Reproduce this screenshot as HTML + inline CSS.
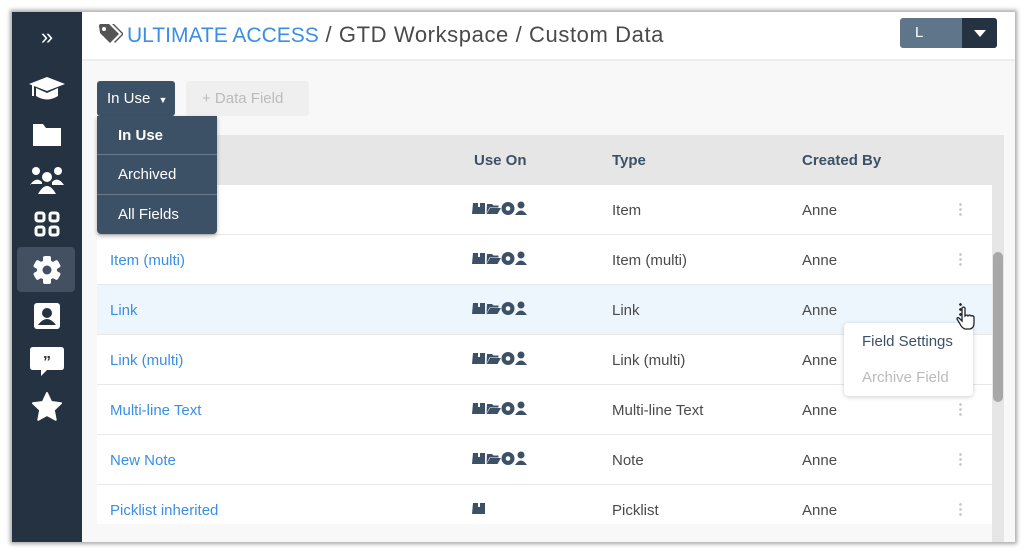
<!DOCTYPE html>
<html><head><style>
*{box-sizing:border-box;margin:0;padding:0}
body{width:1024px;height:553px;background:#fff;font-family:"Liberation Sans",sans-serif;position:relative;overflow:hidden}
.win{position:absolute;left:12px;top:12px;width:1003px;height:530px;background:#f8f8f8;box-shadow:0 0 4px 2px rgba(0,0,0,.35);overflow:hidden}
.side{position:absolute;left:0;top:0;width:70px;height:530px;background:#243242}
.side .ic{position:absolute;left:0;width:70px;text-align:center;color:#fff}
.hdr{position:absolute;left:70px;top:0;right:0;height:49px;background:#fff;border-bottom:2px solid #eee}
.bc{position:absolute;left:45px;top:10px;font-size:21px;color:#4a4a4a;white-space:nowrap}
.bc a{color:#3a8ee6}
.bc b{font-weight:normal;font-size:22px;letter-spacing:0.6px}
.tbl{position:absolute;left:85px;top:123px;width:895px;height:389px;background:#fff;overflow:hidden}
.th{height:50px;background:#e6e6e6;font-weight:bold;color:#3d5166;font-size:15px;position:relative}
.row{height:50px;border-bottom:1px solid #e8e8e8;position:relative;font-size:15px;color:#4a4a4a}
.row span,.th span{position:absolute;top:17px}
.c1{left:13px;color:#3a8ee6}.c2{left:377px}.c3{left:515px}.c4{left:705px}
.dots{position:absolute;left:862px;top:17px;width:3px;height:14px;background:radial-gradient(circle,#ccc 1.3px,transparent 1.5px) 0 0/3px 5px}
.sb{position:absolute;left:980px;top:123px;width:12px;height:407px;background:#e6e6e6}
.sb div{position:absolute;left:1px;top:117px;width:10px;height:150px;background:#a8a8a8;border-radius:5px}
</style></head><body>
<div class="win">
 <div class="side">
  <div class="ic" style="top:12px;font-size:22px">»</div>
  <svg class="ic" style="top:62px" width="70" height="30" viewBox="0 0 70 30"><path d="M17 10 L35 3 L53 10 L35 17Z M24 14 v8 q11 7 22 0 v-8 l-11 5z" fill="#fff"/><rect x="20" y="11" width="2" height="11" fill="#fff"/></svg>
  <svg class="ic" style="top:108px" width="70" height="28"><path d="M21 4 h10 l3 4 h15 v18 h-28z" fill="#fff"/></svg>
  <svg class="ic" style="top:152px" width="70" height="32"><g fill="#fff"><circle cx="24" cy="7" r="4"/><circle cx="46" cy="7" r="4"/><circle cx="35" cy="13" r="5"/><path d="M18 21 q6-9 12-3 v2 h-12z M40 18 q6-6 12 3 h-12z M26 30 q9-16 18 0z"/></g></svg>
  <svg class="ic" style="top:199px" width="70" height="28"><g fill="none" stroke="#fff" stroke-width="3"><rect x="24" y="2" width="8" height="8" rx="2"/><rect x="38" y="2" width="8" height="8" rx="2"/><rect x="24" y="16" width="8" height="8" rx="2"/><rect x="38" y="16" width="8" height="8" rx="2"/></g></svg>
  <div style="position:absolute;left:5px;top:235px;width:58px;height:45px;background:#425062;border-radius:4px"></div>
  <svg class="ic" style="top:243px" width="70" height="30"><g fill="#fff"><circle cx="35" cy="15" r="10"/><g id="t"><rect x="31" y="1" width="8" height="28" rx="2"/></g><use href="#t" transform="rotate(60 35 15)"/><use href="#t" transform="rotate(120 35 15)"/></g><circle cx="35" cy="15" r="4.5" fill="#425062"/></svg>
  <svg class="ic" style="top:290px" width="70" height="28"><rect x="22" y="1" width="26" height="26" rx="3" fill="#fff"/><circle cx="35" cy="11" r="5" fill="#243242"/><path d="M26 23 q9-12 18 0z" fill="#243242"/></svg>
  <svg class="ic" style="top:334px" width="70" height="32"><path d="M21 1 h28 q3 0 3 3 v17 q0 3-3 3 h-14 l-6 6 v-6 h-8 q-3 0-3-3 v-17 q0-3 3-3z" fill="#fff"/><text x="35" y="21" font-size="16" font-weight="bold" fill="#243242" text-anchor="middle" font-family="Liberation Sans">”</text></svg>
  <svg class="ic" style="top:380px" width="70" height="30"><path d="M35 1 l4.2 9 9.8 1.2 -7.2 6.8 1.9 9.8 -8.7 -4.8 -8.7 4.8 1.9 -9.8 -7.2 -6.8 9.8 -1.2z" fill="#fff" stroke="#fff" stroke-width="2" stroke-linejoin="round"/></svg>
 </div>
 <div class="hdr">
  <svg style="position:absolute;left:15px;top:11px" width="26" height="24"><path d="M2 3 q0-2 2-2 h8 l10 10 -9 9 -10-10z" fill="#555"/><path d="M15 1 h2 l10 10 -9 9 -1-1 8-8z" fill="#555"/><circle cx="7" cy="6" r="2" fill="#fff"/></svg>
  <div class="bc"><a>ULTIMATE ACCESS</a><b> / GTD Workspace / Custom Data</b></div>
  <div style="position:absolute;left:818px;top:6px;width:97px;height:30px;border-radius:3px;background:#5f7589;overflow:hidden">
   <span style="position:absolute;left:15px;top:6px;color:#fff;font-size:15px">L</span>
   <div style="position:absolute;left:62px;top:0;width:35px;height:30px;background:#243242"><div style="position:absolute;left:12px;top:12px;border:6px solid transparent;border-top:7px solid #fff;border-bottom:0"></div></div>
  </div>
 </div>
 <div style="position:absolute;left:85px;top:69px;width:78px;height:35px;background:#3d5166;border-radius:3px;color:#fff;font-size:15px;padding:9px 0 0 10px">In Use <span style="font-size:9px;margin-left:4px">▼</span></div>
 <div style="position:absolute;left:174px;top:69px;width:123px;height:35px;background:#efefef;border-radius:3px;color:#bbb;font-size:15px;padding:9px 0 0 16px">+ Data Field</div>
 <div class="tbl">
  <div class="th"><span class="c2" style="color:#3d5166">Use On</span><span class="c3" style="color:#3d5166">Type</span><span class="c4" style="color:#3d5166">Created By</span></div>
  <div class="row"><span class="c3">Item</span><span class="c4">Anne</span><div class="dots"></div></div>
  <div class="row"><span class="c1">Item (multi)</span><span class="c3">Item (multi)</span><span class="c4">Anne</span><div class="dots"></div></div>
  <div class="row" style="background:#eef6fd"><span class="c1">Link</span><span class="c3">Link</span><span class="c4">Anne</span><div class="dots" style="background:radial-gradient(circle,#333 1.3px,transparent 1.5px) 0 0/3px 5px"></div></div>
  <div class="row"><span class="c1">Link (multi)</span><span class="c3">Link (multi)</span><span class="c4">Anne</span><div class="dots"></div></div>
  <div class="row"><span class="c1">Multi-line Text</span><span class="c3">Multi-line Text</span><span class="c4">Anne</span><div class="dots"></div></div>
  <div class="row"><span class="c1">New Note</span><span class="c3">Note</span><span class="c4">Anne</span><div class="dots"></div></div>
  <div class="row"><span class="c1">Picklist inherited</span><span class="c3">Picklist</span><span class="c4">Anne</span><div class="dots"></div></div>
 </div>
 <svg style="position:absolute;left:460px;top:188px" width="80" height="320">
  <defs><g id="ic" fill="#3d5166"><path d="M1 3 h5 v4 h2 v-4 h5 v11 h-13z"/><path d="M15 4 h5 l1.5 1.5 h5 v2 h-9 l-3 6z M18 8 h11 l-3.5 6 h-11z"/><circle cx="36" cy="8.5" r="6.5"/><circle cx="36" cy="8.5" r="2.3" fill="#fff"/><circle cx="49" cy="5" r="3.5"/><path d="M43 15 q6-9 12 0z"/></g></defs>
  <use href="#ic" y="0"/><use href="#ic" y="50"/><use href="#ic" y="100"/><use href="#ic" y="150"/><use href="#ic" y="200"/><use href="#ic" y="250"/>
  <path d="M1 303 h5 v4 h2 v-4 h5 v11 h-13z" fill="#3d5166"/>
 </svg>
 <div class="sb"><div></div></div>
 <div style="position:absolute;left:85px;top:104px;width:120px;height:118px;background:#3d5166;border-radius:0 0 4px 4px;box-shadow:0 2px 4px rgba(0,0,0,.3);color:#fff;font-size:15px">
  <div style="height:39px;border-bottom:1px solid #6b7a8a;padding:11px 0 0 21px;font-weight:bold">In Use</div>
  <div style="height:40px;border-bottom:1px solid #6b7a8a;padding:11px 0 0 21px">Archived</div>
  <div style="padding:11px 0 0 21px">All Fields</div>
 </div>
 <div style="position:absolute;left:832px;top:311px;width:129px;height:73px;background:#fff;border-radius:4px;box-shadow:0 1px 5px rgba(0,0,0,.2);font-size:15px">
  <div style="position:absolute;left:18px;top:10px;color:#3d5166">Field Settings</div>
  <div style="position:absolute;left:18px;top:46px;color:#bbb">Archive Field</div>
 </div>
 <svg style="position:absolute;left:944px;top:294px" width="20" height="24"><path d="M6 2 q2-2 3 0 v8 q2-2 3 0 q2-2 3 0 q2-1 3 1 v6 q0 5-4 6 h-5 q-3-1-5-5 l-3-5 q0-2 2-1 l3 3z" fill="#fff" stroke="#222" stroke-width="1.3"/></svg>
</div>
</body></html>
